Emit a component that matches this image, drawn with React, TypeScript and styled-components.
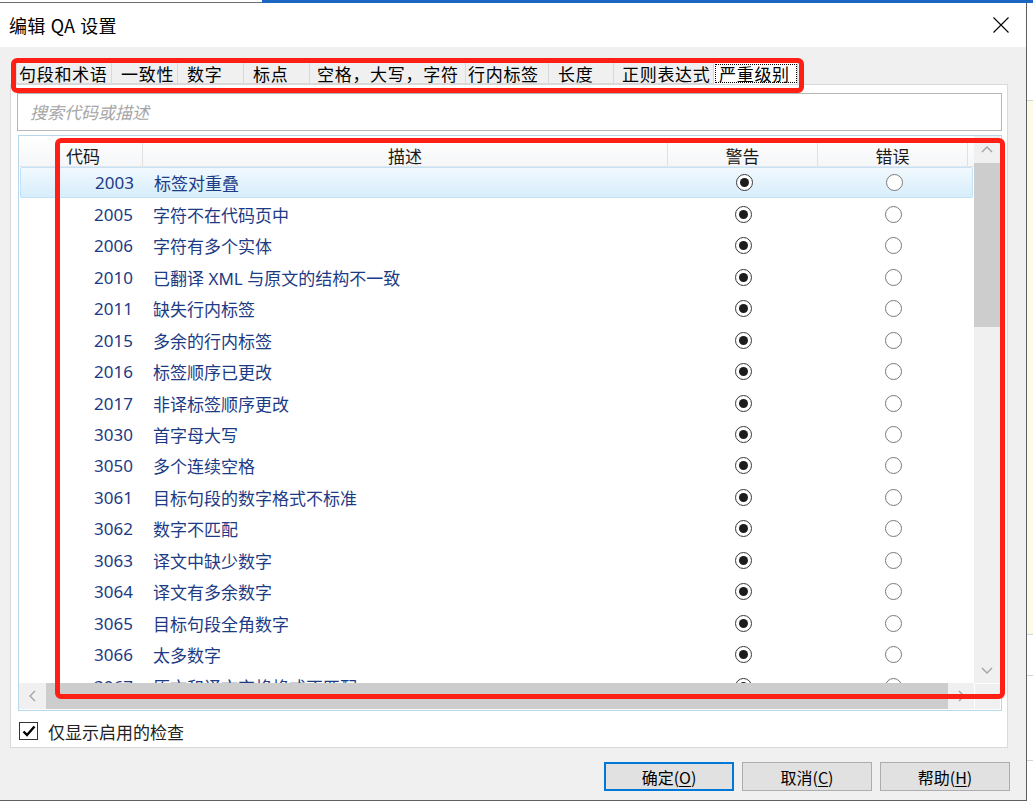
import styled, { createGlobalStyle } from 'styled-components';

const GlobalStyle = createGlobalStyle`
  html, body {
    margin: 0;
    padding: 0;
    background: #fff;
  }
  body {
    font-family: "Noto Sans", "Noto Sans CJK SC", sans-serif;
  }
`

const UI_FONT = `"Noto Sans CJK SC", "Noto Sans", sans-serif`

const Page = styled.div`
    position: relative;
    width: 1033px;
    height: 801px;
    display: flex;
    flex-direction: column;
    overflow: hidden;
`

const TopStrip = styled.div`
    height: 3px;
    display: flex;
`

const TopLeft = styled.div`
    width: 262px;
    box-sizing: border-box;
    background: #fff;
    border-bottom: 1px solid #6e6e6e;
`

const TopRight = styled.div`
    flex: 1;
    background: #1a66c2;
`

const Main = styled.div`
    flex: 1;
    display: flex;
    min-height: 0;
`

const Dialog = styled.div`
    width: 1027px;
    box-sizing: border-box;
    display: flex;
    flex-direction: column;
    background: #f0f0f0;
    border-right: 1px solid #5f5f5f;
    border-bottom: 1px solid #5f5f5f;
`

const BehindApp = styled.div`
    flex: 1;
    display: flex;
    flex-direction: column;
    background: #fff;
`

const BehindBlock = styled.div<{ $h: number; $bg: string }>`
    height: ${({ $h }) => $h}px;
    background: ${({ $bg }) => $bg};
    border-bottom: 1px solid #d6d6d6;
`

const TitleBar = styled.div`
    height: 44px;
    flex-shrink: 0;
    display: flex;
    align-items: center;
    justify-content: space-between;
    padding: 0 17px 0 9px;
    background: #fff;
`

const Title = styled.span`
    font-family: ${UI_FONT};
    font-size: 18px;
    word-spacing: 1px;
    letter-spacing: 0.2px;
    color: #000;
`

const Body = styled.div`
    flex: 1;
    display: flex;
    flex-direction: column;
    padding: 16px 18px 0 10px;
`

const TabStrip = styled.div`
    display: flex;
    height: 21px;
    margin-left: 6px;
`

const Tab = styled.div<{ $w: number; $pl: number; $active?: boolean }>`
    flex: 0 0 ${({ $w }) => $w}px;
    padding-left: ${({ $pl }) => $pl}px;
    box-sizing: border-box;
    font-family: ${UI_FONT};
    font-size: 17px;
    letter-spacing: 0.7px;
    line-height: 21px;
    color: #000;
    white-space: nowrap;
    background: ${({ $active }) => ($active ? '#fff' : 'transparent')};
    border-right: 1px solid #d9d9d9;
    border-bottom: ${({ $active }) => ($active ? 'none' : '1px solid #d9d9d9')};
    outline: ${({ $active }) => ($active ? '1px dotted #000' : 'none')};
    outline-offset: -2px;

    &:first-child {
        border-left: 1px solid #d9d9d9;
    }
`

const Pane = styled.div`
    height: 664px;
    box-sizing: border-box;
    display: flex;
    flex-direction: column;
    background: #fff;
    border: 1px solid #d9d9d9;
    padding: 8px 5px 0 6px;
`

const SearchBox = styled.div`
    height: 38px;
    box-sizing: border-box;
    display: flex;
    align-items: center;
    padding: 0 0 2px 12px;
    border: 1px solid #b5b5b5;
    font-family: ${UI_FONT};
    font-size: 17px;
    font-style: italic;
    color: #a6a6a6;
`

const ListView = styled.div`
    margin: 4px 0 0 1px;
    height: 576px;
    box-sizing: border-box;
    border: 1px solid #b8d6ec;
    padding: 0 1px 1px 0;
    display: grid;
    grid-template-columns: 1fr 26px;
    grid-template-rows: 1fr 26px;
`

const ListContent = styled.div`
    overflow: hidden;
    min-height: 0;
    background: #fff;
`

const COLS = '41px 83px 525px 150px 150px 1fr'

const HeaderRow = styled.div`
    display: grid;
    grid-template-columns: ${COLS};
    height: 31px;
    box-sizing: border-box;
    background: linear-gradient(#ffffff, #f5f6f8);
    border-bottom: 1px solid #e4e7eb;
`

const HeaderCell = styled.div<{ $center?: boolean; $sep?: boolean }>`
    display: flex;
    align-items: center;
    justify-content: ${({ $center }) => ($center ? 'center' : 'flex-start')};
    padding: 1px 0 0 ${({ $center }) => ($center ? 0 : 6)}px;
    font-family: ${UI_FONT};
    font-size: 17px;
    color: #1a1a1a;
    border-right: ${({ $sep }) => ($sep ? '1px solid #e1e1e1' : 'none')};
    margin: 6px 0 0;
`

const Row = styled.div<{ $sel?: boolean }>`
    display: grid;
    grid-template-columns: ${COLS};
    height: 31.47px;
    box-sizing: border-box;
    align-items: center;
    font-family: "Noto Sans", "Noto Sans CJK SC", sans-serif;
    font-size: 17px;
    color: #1d3b85;
    margin: 0 ${({ $sel }) => ($sel ? 1 : 0)}px;
    border-radius: 2px;
    background: ${({ $sel }) => ($sel ? 'linear-gradient(#f2f9fe, #d6edfb)' : 'transparent')};
    box-shadow: ${({ $sel }) => ($sel ? 'inset 0 0 0 1px #c4e2f6' : 'none')};
`

const CodeCell = styled.span`
    text-align: right;
    padding-right: 10px;
`

const DescCell = styled.span`
    padding-left: 10px;
    white-space: nowrap;
`

const RadioCell = styled.span`
    display: flex;
    justify-content: center;
`

const Radio = styled.span<{ $on?: boolean }>`
    width: 17px;
    height: 17px;
    box-sizing: border-box;
    border-radius: 50%;
    border: 1px solid ${({ $on }) => ($on ? '#3a3a3a' : '#7a7a7a')};
    background: #fff;
    display: flex;
    align-items: center;
    justify-content: center;

    &::after {
        content: '';
        width: 9px;
        height: 9px;
        border-radius: 50%;
        background: ${({ $on }) => ($on ? '#1c1c1c' : 'transparent')};
    }
`

const VScroll = styled.div`
    display: flex;
    flex-direction: column;
    background: #f0f0f0;
`

const HScroll = styled.div`
    display: flex;
    background: #f0f0f0;
`

const ArrowBtn = styled.div<{ $size: number }>`
    flex: 0 0 ${({ $size }) => $size}px;
    display: flex;
    align-items: center;
    justify-content: center;
    background: #f0f0f0;
`

const VThumb = styled.div`
    height: 164px;
    background: #cdcdcd;
`

const HThumb = styled.div`
    flex: 1;
    margin-left: 1px;
    background: #cdcdcd;
`

const Filler = styled.div`
    flex: 1;
`

const Corner = styled.div`
    background: #f0f0f0;
    border-left: 1px solid #fff;
    border-top: 1px solid #fff;
`

const CheckRow = styled.label`
    display: flex;
    align-items: center;
    gap: 10px;
    height: 18px;
    margin: 11px 0 0 2px;
    font-family: ${UI_FONT};
    font-size: 17px;
    color: #222;
`

const CheckBox = styled.span`
    width: 19px;
    height: 18px;
    box-sizing: border-box;
    border: 1px solid #333;
    background: #fff;
    display: flex;
    align-items: center;
    justify-content: center;
`

const ButtonRow = styled.div`
    display: flex;
    justify-content: flex-end;
    gap: 8px;
    margin: 14px -2px 0 0;
`

const Button = styled.button<{ $primary?: boolean }>`
    width: 130px;
    height: 29px;
    box-sizing: border-box;
    padding: 0;
    background: #e1e1e1;
    border: ${({ $primary }) => ($primary ? '2px solid #0078d7' : '1px solid #adadad')};
    font-family: ${UI_FONT};
    font-size: 16px;
    color: #000;

    u {
        text-underline-offset: 2px;
    }
`

const Annotation = styled.div<{ $x: number; $y: number; $w: number; $h: number }>`
    position: absolute;
    left: ${({ $x }) => $x}px;
    top: ${({ $y }) => $y}px;
    width: ${({ $w }) => $w}px;
    height: ${({ $h }) => $h}px;
    box-sizing: border-box;
    border: 5px solid #ff1f14;
    border-radius: 6px;
    pointer-events: none;
`

const tabs: [string, number, number][] = [
    ['句段和术语', 96, 2],
    ['一致性', 66, 9],
    ['数字', 66, 9],
    ['标点', 66, 9],
    ['空格，大写，字符', 156, 7],
    ['行内标签', 83, 2],
    ['长度', 65, 9],
    ['正则表达式', 100, 8],
    ['严重级别', 84, 5],
]

const checks: [string, string][] = [
    ['2003', '标签对重叠'],
    ['2005', '字符不在代码页中'],
    ['2006', '字符有多个实体'],
    ['2010', '已翻译 XML 与原文的结构不一致'],
    ['2011', '缺失行内标签'],
    ['2015', '多余的行内标签'],
    ['2016', '标签顺序已更改'],
    ['2017', '非译标签顺序更改'],
    ['3030', '首字母大写'],
    ['3050', '多个连续空格'],
    ['3061', '目标句段的数字格式不标准'],
    ['3062', '数字不匹配'],
    ['3063', '译文中缺少数字'],
    ['3064', '译文有多余数字'],
    ['3065', '目标句段全角数字'],
    ['3066', '太多数字'],
    ['3067', '原文和译文空格格式不匹配'],
]

const Chevron = ({ dir }: { dir: 'up' | 'down' | 'left' | 'right' }) => {
    const pts = {
        up: '1,7 6,2 11,7',
        down: '1,2 6,7 11,2',
        left: '7,1 2,6 7,11',
        right: '2,1 7,6 2,11',
    }[dir]
    const vertical = dir === 'up' || dir === 'down'
    return (
        <svg width={vertical ? 12 : 9} height={vertical ? 9 : 12} viewBox={vertical ? '0 0 12 9' : '0 0 9 12'}>
            <polyline points={pts} fill="none" stroke="#a3a3a3" strokeWidth="1.4" />
        </svg>
    )
}

export default function App() {
    return (
        <Page>
            <GlobalStyle />
            <TopStrip>
                <TopLeft />
                <TopRight />
            </TopStrip>
            <Main>
                <Dialog>
                    <TitleBar>
                        <Title>编辑 QA 设置</Title>
                        <svg width="16" height="16" viewBox="0 0 16 16">
                            <path d="M0.5 0.5 L15.5 15.5 M15.5 0.5 L0.5 15.5" stroke="#000" strokeWidth="1.1" />
                        </svg>
                    </TitleBar>
                    <Body>
                        <TabStrip>
                            {tabs.map(([label, w, pl], i) => (
                                <Tab key={label} $w={w} $pl={pl} $active={i === tabs.length - 1}>
                                    {label}
                                </Tab>
                            ))}
                        </TabStrip>
                        <Pane>
                            <SearchBox>搜索代码或描述</SearchBox>
                            <ListView>
                                <ListContent>
                                    <HeaderRow>
                                        <HeaderCell />
                                        <HeaderCell $sep>代码</HeaderCell>
                                        <HeaderCell $center $sep>描述</HeaderCell>
                                        <HeaderCell $center $sep>警告</HeaderCell>
                                        <HeaderCell $center $sep>错误</HeaderCell>
                                        <HeaderCell />
                                    </HeaderRow>
                                    {checks.map(([code, desc], i) => (
                                        <Row key={code} $sel={i === 0}>
                                            <span />
                                            <CodeCell>{code}</CodeCell>
                                            <DescCell>{desc}</DescCell>
                                            <RadioCell><Radio $on /></RadioCell>
                                            <RadioCell><Radio /></RadioCell>
                                            <span />
                                        </Row>
                                    ))}
                                </ListContent>
                                <VScroll>
                                    <ArrowBtn $size={27}><Chevron dir="up" /></ArrowBtn>
                                    <VThumb />
                                    <Filler />
                                    <ArrowBtn $size={25}><Chevron dir="down" /></ArrowBtn>
                                </VScroll>
                                <HScroll>
                                    <ArrowBtn $size={26}><Chevron dir="left" /></ArrowBtn>
                                    <HThumb />
                                    <ArrowBtn $size={26}><Chevron dir="right" /></ArrowBtn>
                                </HScroll>
                                <Corner />
                            </ListView>
                            <CheckRow>
                                <CheckBox>
                                    <svg width="14" height="12" viewBox="0 0 14 12">
                                        <path d="M1.5 6.5 L5 10 L12.5 1.5" fill="none" stroke="#000" strokeWidth="2.4" />
                                    </svg>
                                </CheckBox>
                                仅显示启用的检查
                            </CheckRow>
                        </Pane>
                        <ButtonRow>
                            <Button $primary>确定(<u>O</u>)</Button>
                            <Button>取消(<u>C</u>)</Button>
                            <Button>帮助(<u>H</u>)</Button>
                        </ButtonRow>
                    </Body>
                </Dialog>
                <BehindApp>
                    <BehindBlock $h={97} $bg="#fff" />
                    <BehindBlock $h={533} $bg="#fdfbe8" />
                    <BehindBlock $h={40} $bg="#fff" />
                    <BehindBlock $h={84} $bg="#fff" />
                </BehindApp>
            </Main>
            <Annotation $x={11} $y={58} $w={793} $h={35} />
            <Annotation $x={55} $y={138} $w={950} $h={561} />
        </Page>
    )
}
